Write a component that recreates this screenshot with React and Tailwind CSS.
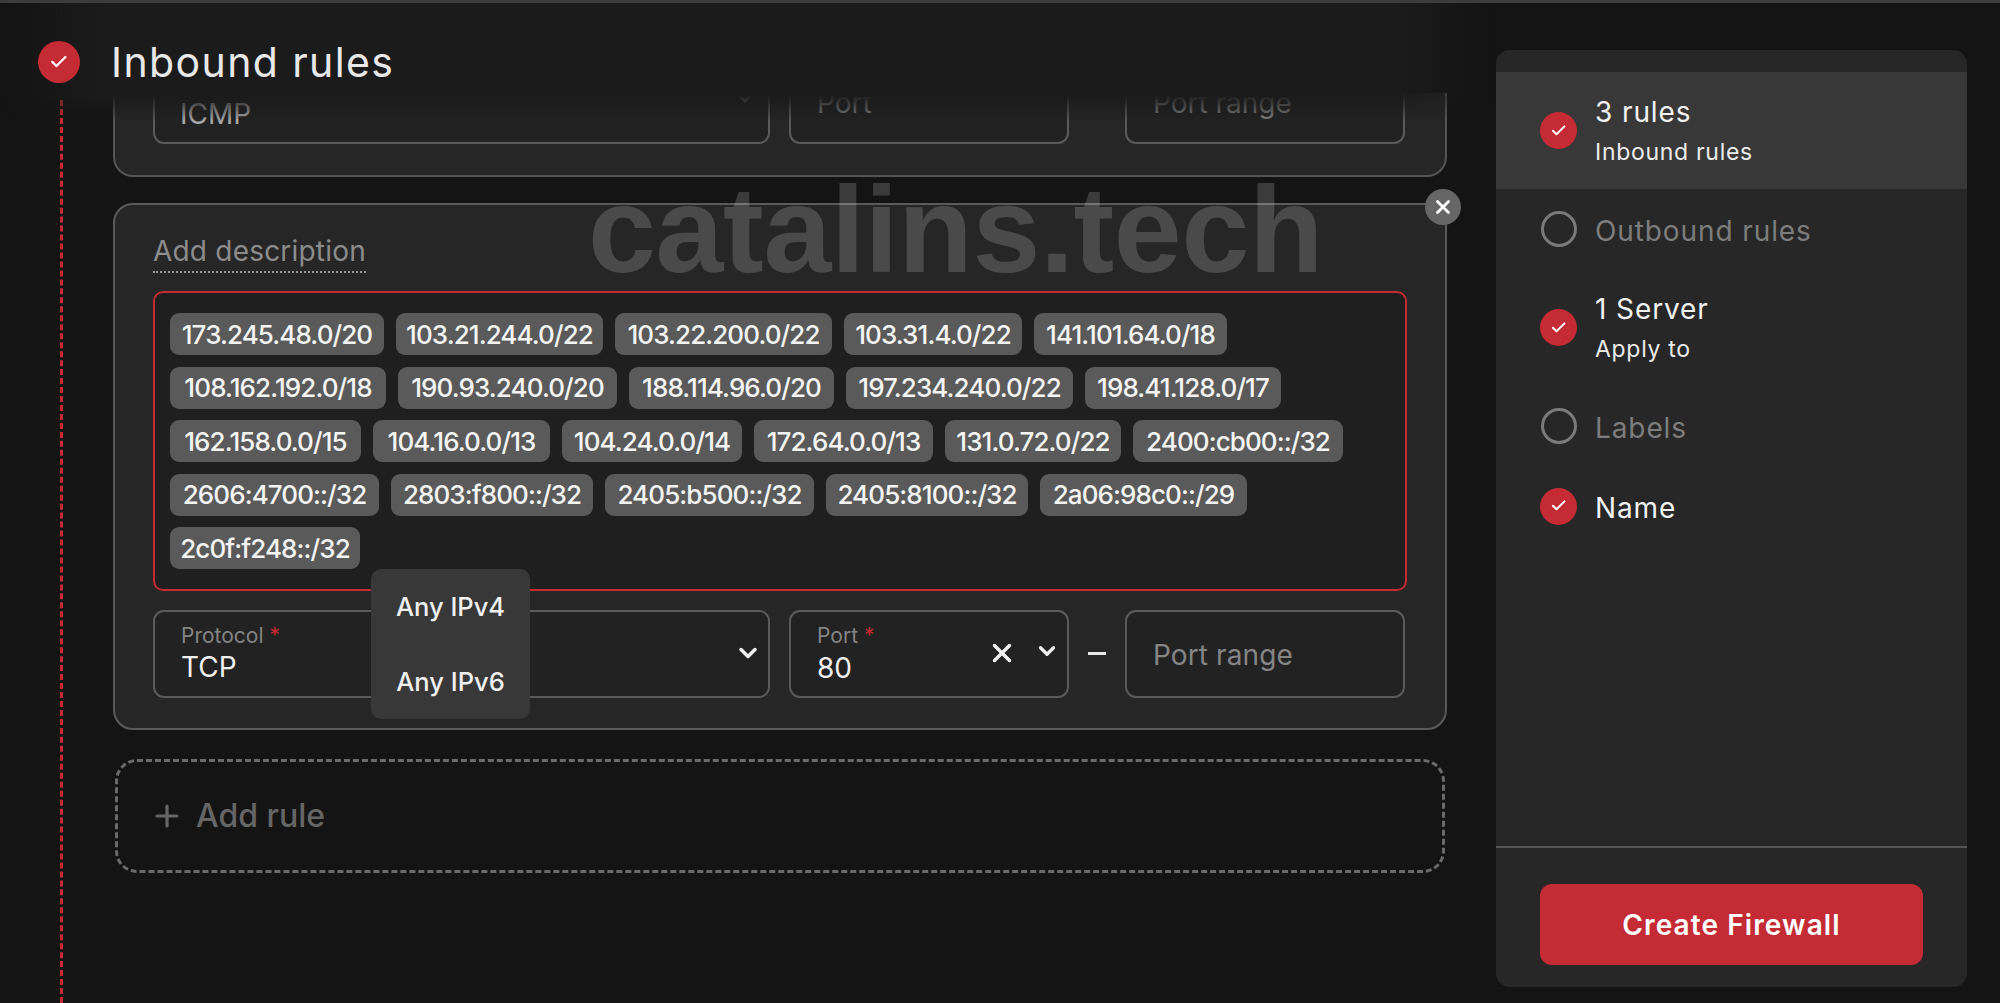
import React from "react";
import { Check, ChevronDown, X, Plus } from "lucide-react";

const rows = [
  [["173.245.48.0/20", "w-[214px]"], ["103.21.244.0/22", "w-[207px]"], ["103.22.200.0/22", "w-[217px]"], ["103.31.4.0/22", "w-[178px]"], ["141.101.64.0/18", "w-[193px]"]],
  [["108.162.192.0/18", "w-[216px]"], ["190.93.240.0/20", "w-[219px]"], ["188.114.96.0/20", "w-[205px]"], ["197.234.240.0/22", "w-[227px]"], ["198.41.128.0/17", "w-[196px]"]],
  [["162.158.0.0/15", "w-[191px]"], ["104.16.0.0/13", "w-[177px]"], ["104.24.0.0/14", "w-[180px]"], ["172.64.0.0/13", "w-[179px]"], ["131.0.72.0/22", "w-[176px]"], ["2400:cb00::/32", "w-[210px]"]],
  [["2606:4700::/32", "w-[209px]"], ["2803:f800::/32", "w-[202px]"], ["2405:b500::/32", "w-[209px]"], ["2405:8100::/32", "w-[202px]"], ["2a06:98c0::/29", "w-[207px]"]],
  [["2c0f:f248::/32", "w-[190px]"]],
];

function Done({ size }) {
  return (
    <span className={`flex shrink-0 items-center justify-center rounded-full bg-[#c42b34] ${size}`}>
      <Check className="h-[47%] w-[47%] text-white" strokeWidth={2.75} />
    </span>
  );
}

function Step({ done, title, sub, active }) {
  return (
    <div className={`flex items-center gap-[18px] pl-[44px] ${active ? "bg-[#383838] h-[117px]" : sub ? "h-[117px]" : "h-[80px]"}`}>
      {done ? (
        <Done size="h-[37px] w-[37px]" />
      ) : (
        <span className="h-[36px] w-[36px] shrink-0 rounded-full border-[3px] border-[#7a7a7a] ml-[0.5px] mr-[0.5px]" />
      )}
      <div className={`flex flex-col ${sub ? "pt-[3px]" : "pt-[3px]"}`}>
        <span className={`text-[28px] leading-[36px] tracking-[0.9px] ${done ? "text-[#f2f2f2]" : "text-[#7d7d7d]"}`}>{title}</span>
        {sub && <span className="mt-[4px] text-[23px] leading-[36px] tracking-[0.7px] text-[#ececec]">{sub}</span>}
      </div>
    </div>
  );
}

function Box({ className, children }) {
  return <div className={`relative h-[88px] shrink-0 rounded-[11px] border-2 border-[#5a5a5a] bg-[#222222] ${className}`}>{children}</div>;
}

export default function App() {
  return (
    <div className="relative flex h-screen w-full overflow-hidden border-t-[3px] border-[#3c3c3c] bg-[#141414] font-['Inter',sans-serif]">
      {/* timeline */}
      <div className="absolute left-[60px] top-[97px] bottom-0 w-0 border-l-[3px] border-dashed border-[#c42b34]" />

      <div className="relative flex w-[1447px] shrink-0 flex-col pl-[113px] pt-[90px]">
        {/* first rule, scrolled under the header */}
        <div className="h-[84px] shrink-0 overflow-hidden rounded-b-[20px] border-x-2 border-b-2 border-[#555555] bg-[#262626] px-[38px]">
          <div className="-mt-[37px] flex items-start">
            <Box className="w-[617px]">
              <span className="absolute left-[25px] top-[38px] text-[28px] leading-[36px] text-[#a8a8a8]">ICMP</span>
              <ChevronDown className="absolute right-[11px] top-[28px] h-[24px] w-[24px] text-[#888888]" strokeWidth={3} />
            </Box>
            <Box className="ml-[19px] w-[280px]">
              <span className="absolute left-[26px] top-[27px] text-[28px] leading-[36px] text-[#7f7f7f]">Port</span>
            </Box>
            <span className="mt-[28px] w-[56px] text-center text-[28px] leading-[20px] text-[#777777]">–</span>
            <Box className="w-[280px]">
              <span className="absolute left-[26px] top-[27px] text-[28px] leading-[36px] text-[#7f7f7f]">Port range</span>
            </Box>
          </div>
        </div>

        {/* second rule */}
        <div className="relative mt-[26px] h-[527px] shrink-0 rounded-[20px] border-2 border-[#5a5a5a] bg-[#262626] px-[38px] pt-[27px]">
          <span className="inline-block border-b-2 border-dotted border-[#9a9a9a] text-[28px] leading-[39px] tracking-[0.2px] text-[#8c8c8c]">Add description</span>

          <div className="mt-[18px] flex h-[300px] flex-col gap-[11.5px] rounded-[10px] border-2 border-[#c42b34] bg-[#1f1f1f] pl-[15px] pt-[20px]">
            {rows.map((row, i) => (
              <div key={i} className="flex gap-[12px]">
                {row.map(([t, w]) => (
                  <span key={t} className={`flex h-[42px] items-center justify-center rounded-[9px] bg-[#5a5a5a] text-[26px] font-medium tracking-[-0.9px] text-[#f4f4f4] ${w}`}>{t}</span>
                ))}
              </div>
            ))}
          </div>

          <div className="mt-[19px] flex items-start">
            <Box className="w-[617px]">
              <span className="absolute left-[26px] top-[12px] text-[21px] leading-[24px] text-[#858585]">Protocol <span className="text-[#c42b34]">*</span></span>
              <span className="absolute left-[26px] top-[37px] text-[28px] leading-[36px] text-[#f0f0f0]">TCP</span>
              <ChevronDown className="absolute right-[6px] top-[27px] h-[28px] w-[28px] text-[#f0f0f0]" strokeWidth={3} />
            </Box>
            <Box className="ml-[19px] w-[280px]">
              <span className="absolute left-[26px] top-[12px] text-[21px] leading-[24px] text-[#858585]">Port <span className="text-[#c42b34]">*</span></span>
              <span className="absolute left-[26px] top-[38px] text-[28px] leading-[36px] text-[#f0f0f0]">80</span>
              <X className="absolute right-[50px] top-[26px] h-[30px] w-[30px] text-[#f0f0f0]" strokeWidth={2.75} />
              <ChevronDown className="absolute right-[7px] top-[26px] h-[26px] w-[26px] text-[#f0f0f0]" strokeWidth={3} />
            </Box>
            <span className="mt-[42px] flex w-[56px] justify-center">
              <span className="block h-[3px] w-[18px] bg-[#e8e8e8]" />
            </span>
            <Box className="w-[280px]">
              <span className="absolute left-[26px] top-[25px] text-[28px] leading-[36px] tracking-[0.1px] text-[#858585]">Port range</span>
            </Box>
          </div>

          {/* close button */}
          <span className="absolute -right-[16px] -top-[16px] flex h-[36px] w-[36px] items-center justify-center rounded-full bg-[#666666]">
            <X className="h-[22px] w-[22px] text-white" strokeWidth={3} />
          </span>

          {/* dropdown */}
          <div className="absolute left-[256px] top-[364px] flex h-[150px] w-[159px] flex-col items-center rounded-[10px] bg-[#383838] pt-[22px] text-[25.5px] font-medium leading-[32px] text-[#f0f0f0]">
            <span>Any IPv4</span>
            <span className="mt-[43px]">Any IPv6</span>
          </div>
        </div>

        {/* add rule */}
        <div className="mx-[2px] mt-[29px] flex h-[114px] shrink-0 items-center rounded-[22px] border-[3px] border-dashed border-[#6a6a6a] pl-[32px] text-[32px] text-[#666666]">
          <Plus className="h-[34px] w-[34px]" strokeWidth={2.25} />
          <span className="ml-[12px] font-medium">Add rule</span>
        </div>
      </div>

      {/* sticky header over the scrolling list */}
      <div className="absolute left-0 top-0 flex h-[118px] w-[1490px] items-start pl-[38px] pt-[38px]">
        <div className="absolute inset-0 bg-gradient-to-b from-[#1b1b1b] from-[78%] to-transparent [mask-image:linear-gradient(to_right,transparent,black_7%,black_94%,transparent)]" />
        <Done size="relative h-[42px] w-[42px]" />
        <span className="relative ml-[31px] -mt-[3px] text-[41px] leading-[48px] tracking-[1.4px] text-[#e8e8e8]">Inbound rules</span>
      </div>

      {/* watermark */}
      <div className="pointer-events-none absolute left-[588px] top-[152px] text-[122px] font-bold leading-[150px] tracking-[-0.3px] text-white/[0.17] font-['Liberation_Sans',sans-serif]">catalins.tech</div>

      {/* sidebar */}
      <aside className="ml-[49px] mt-[47px] flex h-[937px] w-[471px] shrink-0 flex-col rounded-[14px] bg-[#272727] pt-[22px]">
        <Step done active title="3 rules" sub="Inbound rules" />
        <Step title="Outbound rules" />
        <Step done title="1 Server" sub="Apply to" />
        <Step title="Labels" />
        <Step done title="Name" />
        <div className="mt-auto flex h-[141px] flex-col border-t-2 border-[#555555] px-[44px] pt-[36px]">
          <button className="h-[81px] w-[383px] rounded-[12px] bg-[#c42b34] text-[28px] font-semibold tracking-[1.1px] text-white">Create Firewall</button>
        </div>
      </aside>
    </div>
  );
}
